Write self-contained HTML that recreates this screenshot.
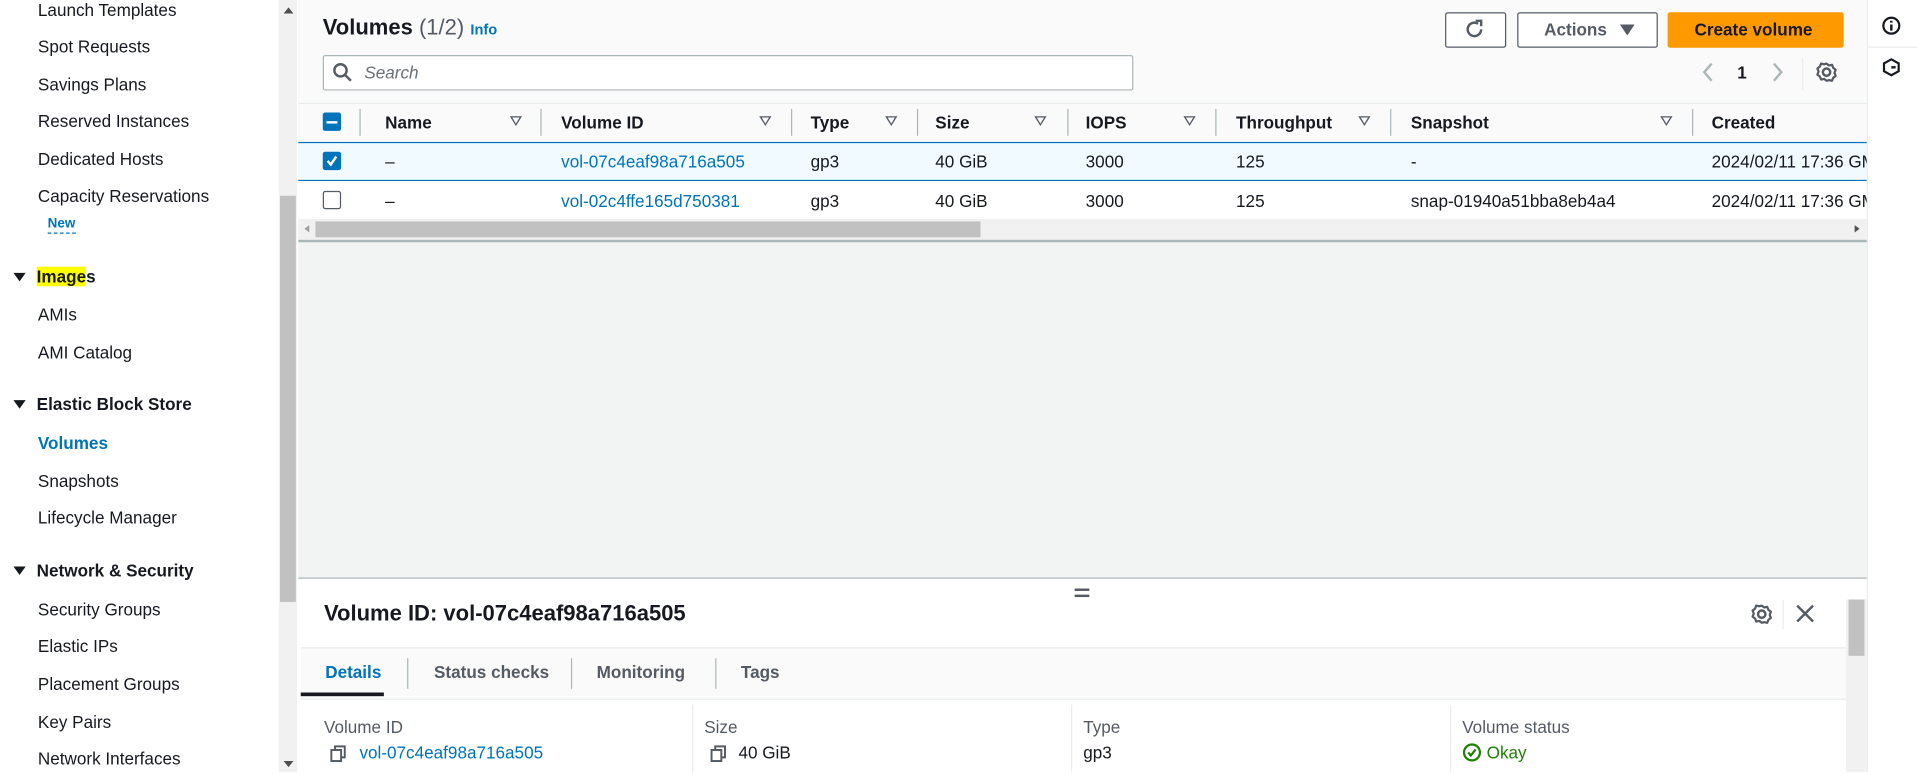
<!DOCTYPE html>
<html><head><meta charset="utf-8"><style>
html,body{margin:0;padding:0;width:1917px;height:772px;overflow:hidden;background:#fff}
#w{position:absolute;left:0;top:0;width:1568px;height:631px;transform:scale(1.22258,1.2235);transform-origin:0 0;font-family:"Liberation Sans",sans-serif;color:#16191f;font-size:14px}
.a{position:absolute;white-space:nowrap}
.sb{left:31px;font-size:14px}
.h{left:30px;font-weight:bold;font-size:14px}
.tri{position:absolute;left:11px;width:0;height:0;border-left:5px solid transparent;border-right:5px solid transparent;border-top:7px solid #16191f}
.th{font-weight:bold;top:92px}
.sep{position:absolute;top:89px;width:1px;height:22px;background:#aab7b8}
.flt{position:absolute;top:95px;width:0;height:0;border-left:5px solid transparent;border-right:5px solid transparent;border-top:8px solid #545b64}
.flt:after{content:"";position:absolute;left:-3px;top:-7px;border-left:3px solid transparent;border-right:3px solid transparent;border-top:5px solid #fafafa}
.lnk{color:#0073bb}
.cb{position:absolute;left:264px;width:13px;height:13px;border:1px solid #545b64;border-radius:2px;background:#fff}
</style></head><body><div id="w">
<div class="a sb" style="top:0">Launch Templates</div>
<div class="a sb" style="top:30px">Spot Requests</div>
<div class="a sb" style="top:61px">Savings Plans</div>
<div class="a sb" style="top:91px">Reserved Instances</div>
<div class="a sb" style="top:122px">Dedicated Hosts</div>
<div class="a sb" style="top:152px">Capacity Reservations</div>
<div class="a" style="left:39px;top:177px;font-size:11px;font-weight:bold;color:#0073bb;border-bottom:1px dashed #0073bb;line-height:13px">New</div>
<div class="tri" style="top:223px"></div>
<div class="a h" style="top:218px"><span style="background:#ffff00">Image</span>s</div>
<div class="a sb" style="top:249px">AMIs</div>
<div class="a sb" style="top:280px">AMI Catalog</div>
<div class="tri" style="top:327px"></div>
<div class="a h" style="top:322px">Elastic Block Store</div>
<div class="a sb" style="top:354px;font-weight:bold;color:#0073bb">Volumes</div>
<div class="a sb" style="top:385px">Snapshots</div>
<div class="a sb" style="top:415px">Lifecycle Manager</div>
<div class="tri" style="top:463px"></div>
<div class="a h" style="top:458px">Network &amp; Security</div>
<div class="a sb" style="top:490px">Security Groups</div>
<div class="a sb" style="top:520px">Elastic IPs</div>
<div class="a sb" style="top:551px">Placement Groups</div>
<div class="a sb" style="top:582px">Key Pairs</div>
<div class="a sb" style="top:612px">Network Interfaces</div>
<div class="a" style="left:228px;top:0;width:15px;height:631px;background:#f1f1f1"></div>
<div class="a" style="left:229px;top:160px;width:13px;height:332px;background:#c1c1c1"></div>
<div class="a" style="left:232px;top:6px;border-left:4px solid transparent;border-right:4px solid transparent;border-bottom:5px solid #505050"></div>
<div class="a" style="left:232px;top:622px;border-left:4px solid transparent;border-right:4px solid transparent;border-top:5px solid #505050"></div>
<div class="a" style="left:244px;top:0;width:1283px;height:631px;background:#f2f3f3"></div>
<div class="a" style="left:244px;top:0;width:1283px;height:84px;background:#fafafa"></div>
<div class="a" style="left:264px;top:12px;font-size:18px;font-weight:bold">Volumes <span style="font-weight:normal;color:#545b64">(1/2)</span> <span style="font-size:12px;color:#0073bb">Info</span></div>
<div class="a" style="left:1182px;top:10px;width:48px;height:27px;border:1px solid #545b64;border-radius:2px;background:#fff"></div>
<svg class="a" style="left:1197px;top:15px" width="18" height="18" viewBox="0 0 18 18"><path d="M14.5 9A5.5 5.5 0 1 1 12 4.4" fill="none" stroke="#545b64" stroke-width="2"/><path d="M10 2h4.5v4.5" fill="none" stroke="#545b64" stroke-width="2"/></svg>
<div class="a" style="left:1241px;top:10px;width:113px;height:27px;border:1px solid #545b64;border-radius:2px;background:#fff"></div>
<div class="a" style="left:1263px;top:16px;font-weight:bold;color:#545b64">Actions</div>
<div class="a" style="left:1325px;top:20px;border-left:6px solid transparent;border-right:6px solid transparent;border-top:9px solid #545b64"></div>
<div class="a" style="left:1364px;top:10px;width:144px;height:29px;background:#ff9900;border-radius:2px"></div>
<div class="a" style="left:1386px;top:16px;font-weight:bold">Create volume</div>
<div class="a" style="left:264px;top:45px;width:661px;height:27px;border:1px solid #aab7b8;border-radius:2px;background:#fff"></div>
<svg class="a" style="left:272px;top:51px" width="16" height="16" viewBox="0 0 16 16"><circle cx="6.5" cy="6.5" r="5" fill="none" stroke="#545b64" stroke-width="2"/><path d="M10 10l5 5" stroke="#545b64" stroke-width="2"/></svg>
<div class="a" style="left:298px;top:51px;font-style:italic;color:#687078">Search</div>
<svg class="a" style="left:1390px;top:50px" width="14" height="18" viewBox="0 0 14 18"><path d="M10 2L4 9l6 7" fill="none" stroke="#aab7b8" stroke-width="2"/></svg>
<div class="a" style="left:1421px;top:51px;font-weight:bold">1</div>
<svg class="a" style="left:1447px;top:50px" width="14" height="18" viewBox="0 0 14 18"><path d="M4 2l6 7-6 7" fill="none" stroke="#aab7b8" stroke-width="2"/></svg>
<div class="a" style="left:1474px;top:47px;width:1px;height:27px;background:#eaeded"></div>
<svg class="a" style="left:1485px;top:50px" width="18" height="18" viewBox="0 0 18 18"><circle cx="9" cy="9" r="3" fill="none" stroke="#545b64" stroke-width="2"/><path d="M9 2l2 1.5 2.5-.5 1 2.5 2 1.5-1 2.5 1 2.5-2 1.5-1 2.5-2.5-.5L9 16l-2-1.5-2.5.5-1-2.5-2-1.5 1-2.5-1-2.5 2-1.5 1-2.5 2.5.5z" fill="none" stroke="#545b64" stroke-width="1.8" stroke-linejoin="round"/></svg>
<div class="a" style="left:244px;top:84px;width:1283px;height:32px;background:#fafafa;border-top:1px solid #eaeded"></div>
<div class="a" style="left:264px;top:92px;width:15px;height:15px;background:#0073bb;border-radius:2px"></div>
<div class="a" style="left:267px;top:99px;width:9px;height:2px;background:#fff"></div>
<div class="sep" style="left:294px"></div>
<div class="a th" style="left:315px">Name</div><div class="flt" style="left:417px"></div>
<div class="sep" style="left:442px"></div>
<div class="a th" style="left:459px">Volume ID</div><div class="flt" style="left:621px"></div>
<div class="sep" style="left:647px"></div>
<div class="a th" style="left:663px">Type</div><div class="flt" style="left:724px"></div>
<div class="sep" style="left:750px"></div>
<div class="a th" style="left:765px">Size</div><div class="flt" style="left:846px"></div>
<div class="sep" style="left:873px"></div>
<div class="a th" style="left:888px">IOPS</div><div class="flt" style="left:968px"></div>
<div class="sep" style="left:994px"></div>
<div class="a th" style="left:1011px">Throughput</div><div class="flt" style="left:1111px"></div>
<div class="sep" style="left:1137px"></div>
<div class="a th" style="left:1154px">Snapshot</div><div class="flt" style="left:1358px"></div>
<div class="sep" style="left:1384px"></div>
<div class="a th" style="left:1400px">Created</div>
<div class="a" style="left:244px;top:116px;width:1283px;height:30px;background:#f1faff;border-top:1px solid #0073bb;border-bottom:1px solid #0073bb"></div>
<div class="a" style="left:244px;top:148px;width:1283px;height:31px;background:#fff"></div>
<div class="a" style="left:264px;top:124px;width:15px;height:15px;background:#0073bb;border-radius:2px"></div>
<svg class="a" style="left:265px;top:125px" width="13" height="13" viewBox="0 0 13 13"><path d="M3 6.5l2.5 3L10 3" fill="none" stroke="#fff" stroke-width="2"/></svg>
<div class="cb" style="top:156px"></div>
<div class="a" style="left:315px;top:124px">–</div><div class="a" style="left:315px;top:156px">–</div>
<div class="a lnk" style="left:459px;top:124px">vol-07c4eaf98a716a505</div>
<div class="a lnk" style="left:459px;top:156px">vol-02c4ffe165d750381</div>
<div class="a" style="left:663px;top:124px">gp3</div><div class="a" style="left:663px;top:156px">gp3</div>
<div class="a" style="left:765px;top:124px">40 GiB</div><div class="a" style="left:765px;top:156px">40 GiB</div>
<div class="a" style="left:888px;top:124px">3000</div><div class="a" style="left:888px;top:156px">3000</div>
<div class="a" style="left:1011px;top:124px">125</div><div class="a" style="left:1011px;top:156px">125</div>
<div class="a" style="left:1154px;top:124px">-</div><div class="a" style="left:1154px;top:156px">snap-01940a51bba8eb4a4</div>
<div class="a" style="left:1400px;top:124px;width:127px;overflow:hidden">2024/02/11 17:36 GMT</div>
<div class="a" style="left:1400px;top:156px;width:127px;overflow:hidden">2024/02/11 17:36 GMT</div>
<div class="a" style="left:244px;top:179px;width:1283px;height:17px;background:#f1f1f1;border-bottom:2px solid #aab7b8"></div>
<div class="a" style="left:258px;top:181px;width:544px;height:13px;background:#c1c1c1"></div>
<div class="a" style="left:249px;top:184px;border-top:3px solid transparent;border-bottom:3px solid transparent;border-right:4px solid #a0a0a0"></div>
<div class="a" style="left:1517px;top:184px;border-top:3px solid transparent;border-bottom:3px solid transparent;border-left:4px solid #505050"></div>
<div class="a" style="left:244px;top:472px;width:1283px;height:159px;background:#fff;border-top:1px solid #aab7b8"></div>
<div class="a" style="left:879px;top:481px;width:12px;height:2px;background:#545b64"></div>
<div class="a" style="left:879px;top:486px;width:12px;height:2px;background:#545b64"></div>
<div class="a" style="left:265px;top:491px;font-size:18px;font-weight:bold">Volume ID: vol-07c4eaf98a716a505</div>
<svg class="a" style="left:1432px;top:493px" width="18" height="18" viewBox="0 0 18 18"><circle cx="9" cy="9" r="3" fill="none" stroke="#545b64" stroke-width="2"/><path d="M9 2l2 1.5 2.5-.5 1 2.5 2 1.5-1 2.5 1 2.5-2 1.5-1 2.5-2.5-.5L9 16l-2-1.5-2.5.5-1-2.5-2-1.5 1-2.5-1-2.5 2-1.5 1-2.5 2.5.5z" fill="none" stroke="#545b64" stroke-width="1.8" stroke-linejoin="round"/></svg>
<div class="a" style="left:1458px;top:490px;width:1px;height:24px;background:#eaeded"></div>
<svg class="a" style="left:1469px;top:494px" width="15" height="15" viewBox="0 0 15 15"><path d="M1 1l13 13M14 1L1 14" stroke="#545b64" stroke-width="2"/></svg>
<div class="a" style="left:246px;top:529px;width:1264px;height:41px;background:#fafafa;border-top:1px solid #eaeded;border-bottom:1px solid #eaeded"></div>
<div class="a" style="left:266px;top:541px;font-weight:bold;color:#0073bb">Details</div>
<div class="a" style="left:246px;top:566px;width:68px;height:3px;background:#16191f"></div>
<div class="a" style="left:333px;top:538px;width:1px;height:25px;background:#aab7b8"></div>
<div class="a" style="left:355px;top:541px;font-weight:bold;color:#545b64">Status checks</div>
<div class="a" style="left:467px;top:538px;width:1px;height:25px;background:#aab7b8"></div>
<div class="a" style="left:488px;top:541px;font-weight:bold;color:#545b64">Monitoring</div>
<div class="a" style="left:585px;top:538px;width:1px;height:25px;background:#aab7b8"></div>
<div class="a" style="left:606px;top:541px;font-weight:bold;color:#545b64">Tags</div>
<div class="a" style="left:566px;top:576px;width:1px;height:55px;background:#eaeded"></div>
<div class="a" style="left:876px;top:576px;width:1px;height:55px;background:#eaeded"></div>
<div class="a" style="left:1186px;top:576px;width:1px;height:55px;background:#eaeded"></div>
<div class="a" style="left:265px;top:586px;color:#545b64">Volume ID</div>
<div class="a" style="left:576px;top:586px;color:#545b64">Size</div>
<div class="a" style="left:886px;top:586px;color:#545b64">Type</div>
<div class="a" style="left:1196px;top:586px;color:#545b64">Volume status</div>
<svg class="a" style="left:270px;top:609px" width="14" height="14" viewBox="0 0 14 14"><rect x="1" y="4" width="8" height="9" fill="none" stroke="#545b64" stroke-width="1.6"/><path d="M4 4V1h8v9H9" fill="none" stroke="#545b64" stroke-width="1.6"/></svg>
<div class="a lnk" style="left:294px;top:607px">vol-07c4eaf98a716a505</div>
<svg class="a" style="left:581px;top:609px" width="14" height="14" viewBox="0 0 14 14"><rect x="1" y="4" width="8" height="9" fill="none" stroke="#545b64" stroke-width="1.6"/><path d="M4 4V1h8v9H9" fill="none" stroke="#545b64" stroke-width="1.6"/></svg>
<div class="a" style="left:604px;top:607px">40 GiB</div>
<div class="a" style="left:886px;top:607px">gp3</div>
<svg class="a" style="left:1196px;top:607px" width="16" height="16" viewBox="0 0 16 16"><circle cx="8" cy="8" r="6.5" fill="none" stroke="#1d8102" stroke-width="1.8"/><path d="M5 8l2 2.5L11 5.5" fill="none" stroke="#1d8102" stroke-width="1.8"/></svg>
<div class="a" style="left:1216px;top:607px;color:#1d8102">Okay</div>
<div class="a" style="left:1510px;top:490px;width:17px;height:141px;background:#f1f1f1"></div>
<div class="a" style="left:1512px;top:490px;width:13px;height:46px;background:#c1c1c1"></div>
<div class="a" style="left:1527px;top:0;width:41px;height:631px;background:#fff;border-left:1px solid #eaeded"></div>
<div class="a" style="left:1528px;top:38px;width:40px;height:1px;background:#eaeded"></div>
<svg class="a" style="left:1539px;top:13px" width="16" height="16" viewBox="0 0 16 16"><circle cx="8" cy="8" r="6.5" fill="none" stroke="#16191f" stroke-width="1.8"/><path d="M8 7v5M8 4v1.5" stroke="#16191f" stroke-width="2"/></svg>
<svg class="a" style="left:1539px;top:47px" width="16" height="16" viewBox="0 0 16 16"><path d="M8 1.5l6 3.3v6.4L8 14.5 2 11.2V4.8z" fill="none" stroke="#16191f" stroke-width="1.8"/><path d="M8 8h3.5" stroke="#16191f" stroke-width="2"/></svg>
</div></body></html>
